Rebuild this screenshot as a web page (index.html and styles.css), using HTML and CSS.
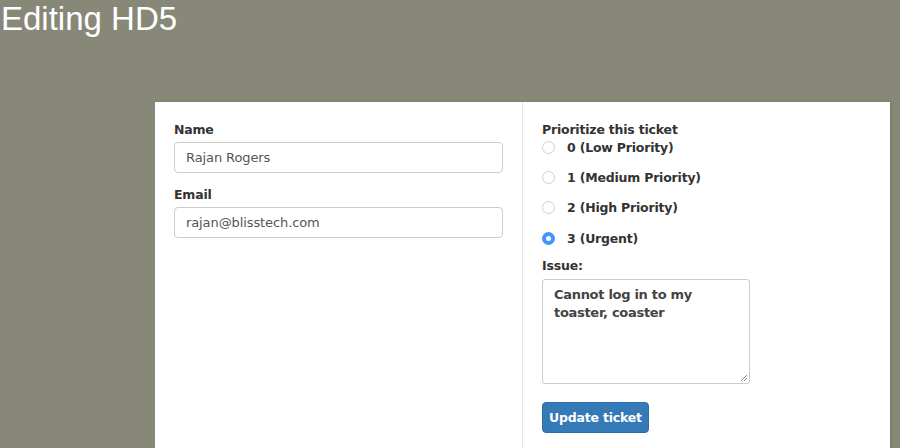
FILE: index.html
```html
<!DOCTYPE html>
<html>
<head>
<meta charset="utf-8">
<link rel="stylesheet" href="styles.css">
</head>
<body>
<h1 class="title">Editing HD5</h1>
<div class="panel">
  <div class="col col-left">
    <div class="field">
      <label class="label">Name</label>
      <div class="input">Rajan Rogers</div>
    </div>
    <div class="field">
      <label class="label">Email</label>
      <div class="input">rajan@blisstech.com</div>
    </div>
  </div>
  <div class="col col-right">
    <div class="label">Prioritize this ticket</div>
    <div class="radios">
      <div class="radio"><span class="dot"></span><span class="rtext">0 (Low Priority)</span></div>
      <div class="radio"><span class="dot"></span><span class="rtext">1 (Medium Priority)</span></div>
      <div class="radio"><span class="dot"></span><span class="rtext">2 (High Priority)</span></div>
      <div class="radio"><span class="dot checked"></span><span class="rtext">3 (Urgent)</span></div>
    </div>
    <div class="label issue-label">Issue:</div>
    <div class="textarea">Cannot log in to my toaster, coaster<svg class="grip" width="8" height="8" viewBox="0 0 8 8"><path d="M7 1L1 7M7 4L4 7" stroke="#888" stroke-width="1"/></svg></div>
    <button class="btn">Update ticket</button>
  </div>
</div>
</body>
</html>
```

FILE: styles.css
```css
html, body {
  margin: 0;
  padding: 0;
  background: #888879;
  height: 100%;
  overflow: hidden;
}
.title {
  margin: 0;
  padding: 0 0 0 1px;
  font-family: "Liberation Sans", Arial, sans-serif;
  font-weight: normal;
  font-size: 33px;
  line-height: 38px;
  color: #fff;
  height: 38px;
}
.panel {
  margin: 64px 0 0 155px;
  width: 735px;
  height: 346px;
  background: #fff;
  display: grid;
  grid-template-columns: 368px 367px;
  box-shadow: 1px 0 2px rgba(0,0,0,0.12);
  font-family: "DejaVu Sans", Verdana, sans-serif;
  color: #333;
}
.col {
  padding: 20px 19px 0 19px;
}
.col-left {
  border-right: 1px solid #e6e6e6;
}
.field {
  margin-bottom: 14px;
}
.label {
  display: block;
  font-weight: bold;
  font-size: 12.5px;
  line-height: 16px;
  color: #333;
  letter-spacing: -0.2px;
  margin-bottom: 4px;
}
.input {
  box-sizing: border-box;
  height: 31px;
  border: 1px solid #ccc;
  border-radius: 4px;
  padding: 0 11px;
  font-size: 13px;
  line-height: 29px;
  color: #555;
  letter-spacing: -0.1px;
}
.radios {
  display: flex;
  flex-direction: column;
  gap: 14px;
  margin-top: -3px;
}
.radio {
  display: flex;
  align-items: center;
  height: 16px;
}
.radio:last-child {
  margin-top: 1px;
}
.dot {
  box-sizing: border-box;
  width: 13px;
  height: 13px;
  border-radius: 50%;
  border: 1px solid #d0d0d0;
  background: #fff;
  margin-right: 12px;
  flex: none;
}
.dot.checked {
  border: 4px solid #3c97f8;
  background: #fff;
}
.rtext {
  font-weight: bold;
  font-size: 12.5px;
  letter-spacing: -0.2px;
  color: #333;
}
.issue-label {
  margin-top: 12px;
  margin-bottom: 5px;
}
.textarea {
  position: relative;
  box-sizing: border-box;
  width: 208px;
  height: 105px;
  border: 1px solid #ccc;
  border-radius: 3px;
  padding: 6px 11px;
  font-weight: bold;
  font-size: 13px;
  line-height: 18px;
  color: #444;
  letter-spacing: -0.3px;
}
.grip {
  position: absolute;
  right: 1px;
  bottom: 1px;
}
.btn {
  display: block;
  margin-top: 18px;
  width: 107px;
  height: 31px;
  border: 1px solid #2e6da4;
  border-radius: 4px;
  background: #337ab7;
  color: #fff;
  font-family: "DejaVu Sans", Verdana, sans-serif;
  font-weight: bold;
  font-size: 12.5px;
  letter-spacing: -0.2px;
  padding: 0;
}
```
